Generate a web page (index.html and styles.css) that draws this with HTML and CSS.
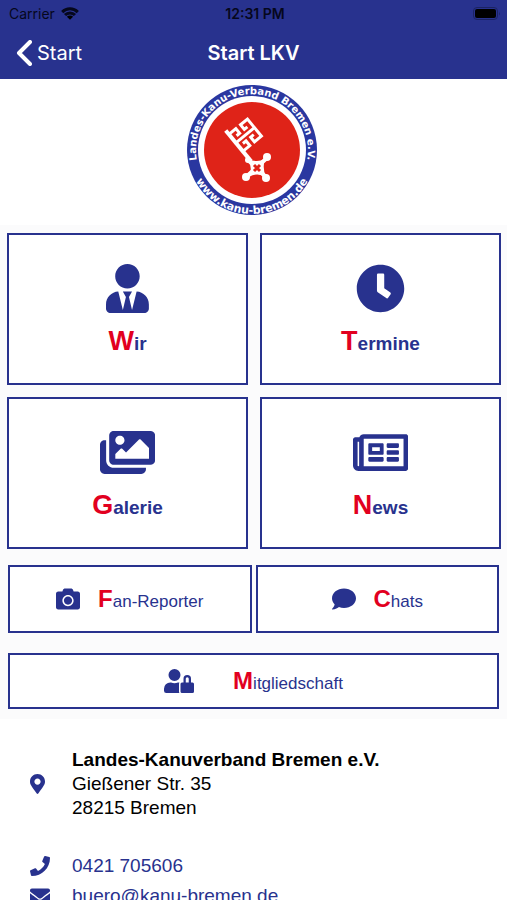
FILE: index.html
```html
<!DOCTYPE html>
<html lang="de">
<head>
    <meta charset="utf-8">
    <meta name="viewport" content="width=device-width, initial-scale=1.0">
    <title>Start LKV</title>
    <link rel="stylesheet" href="styles.css">
</head>
<body>
    <header class="topbar">
        <div class="statusbar">
            <div class="carrier">
                <span>Carrier</span>
                <svg class="wifi" viewBox="0 0 18 13" aria-hidden="true">
                    <path class="wifi-arc" d="M1.2 5.1a11 11 0 0 1 15.6 0M4 8a7 7 0 0 1 10 0"/>
                    <path d="M9 12.8L5.9 9.7a4.4 4.4 0 0 1 6.2 0z"/>
                </svg>
            </div>
            <span class="clock">12:31 PM</span>
            <svg class="battery" viewBox="0 0 28 13" aria-hidden="true">
                <rect class="battery-case" x="0.5" y="0.5" width="24" height="12" rx="3.5"/>
                <rect x="2" y="2" width="21" height="9" rx="2"/>
                <path class="battery-tip" d="M26 4.5q1.5 2 0 4z"/>
            </svg>
        </div>
        <nav class="navbar">
            <a class="back" href="#start">
                <svg class="chevron" viewBox="0 0 16 26" aria-hidden="true"><path d="M14 2L3 13l11 11"/></svg>
                Start
            </a>
            <h1 class="title">Start LKV</h1>
        </nav>
    </header>

    <main class="content">
        <div class="logo-wrap">
            <svg class="logo" viewBox="0 0 130 130" role="img" aria-label="Landes-Kanu-Verband Bremen">
                <defs>
                    <path id="arcTop" d="M13 86A56 56 0 1 1 117 86"/>
                    <path id="arcBottom" d="M1 65A64 64 0 0 0 129 65"/>
                </defs>
                <circle class="logo-ring" cx="65" cy="65" r="65"/>
                <circle class="logo-white" cx="65" cy="65" r="54"/>
                <circle class="logo-red" cx="65" cy="65" r="48"/>
                <text class="logo-text logo-text-top"><textPath href="#arcTop" startOffset="50%">Landes-Kanu-Verband Bremen e.V.</textPath></text>
                <text class="logo-text"><textPath href="#arcBottom" startOffset="50%">www.kanu-bremen.de</textPath></text>
                <g class="key" transform="translate(40 47) rotate(50.6)">
                    <path d="M-2 0H38"/>
                    <path class="key-bit" d="M14 0V-24M3 0V-9H9V-5M25 0V-9H19V-5M9 -19V-15H3V-24H25V-15H19V-19"/>
                </g>
                <path class="key-bow" d="M61 75L80 93M81 72L59 92"/>
                <path class="logo-white" d="M61 74q9 4 17 0q-3 9 1 18q-9-5-17 0q4-9-1-18z"/>
                <g class="logo-white">
                    <circle cx="80" cy="72" r="4"/>
                    <circle cx="59" cy="92" r="4"/>
                    <circle cx="79" cy="93" r="4"/>
                    <circle cx="61" cy="75" r="3"/>
                </g>
                <path class="key-x" d="M67 80l6 6M73 80l-6 6"/>
            </svg>
        </div>

        <section class="menu">
            <div class="tiles">
                <a class="tile" href="#wir">
                    <svg class="icon icon-tile" viewBox="0 0 448 512" aria-hidden="true"><path d="M224 256c70.7 0 128-57.3 128-128S294.7 0 224 0 96 57.3 96 128s57.3 128 128 128zm95.8 32.6L272 480l-32-136 32-56h-96l32 56-32 136-47.8-191.4C56.9 292 0 350.3 0 422.4V464c0 26.5 21.5 48 48 48h352c26.5 0 48-21.5 48-48v-41.6c0-72.1-56.9-130.4-128.2-133.8z"/></svg>
                    <span class="label"><b>W</b>ir</span>
                </a>
                <a class="tile" href="#termine">
                    <svg class="icon icon-tile" viewBox="0 0 512 512" aria-hidden="true"><path d="M256 8C119 8 8 119 8 256s111 248 248 248 248-111 248-248S393 8 256 8zm106 307l-28 41a10 10 0 0 1-14 2l-93-63a20 20 0 0 1-8-16V112a12 12 0 0 1 12-12h52a12 12 0 0 1 12 12v142l64 45a12 12 0 0 1 3 16z"/></svg>
                    <span class="label"><b>T</b>ermine</span>
                </a>
                <a class="tile" href="#galerie">
                    <svg class="icon icon-tile" viewBox="0 0 576 512" aria-hidden="true"><path d="M480 416v16c0 26.510-21.490 48-48 48H48c-26.510 0-48-21.490-48-48V176c0-26.510 21.490-48 48-48h16v208c0 44.112 35.888 80 80 80h336zm96-80V80c0-26.510-21.490-48-48-48H144c-26.510 0-48 21.490-48 48v256c0 26.510 21.490 48 48 48h384c26.510 0 48-21.490 48-48zM256 128c0 26.510-21.490 48-48 48s-48-21.490-48-48 21.490-48 48-48 48 21.490 48 48zm-96 144l55.515-55.515c4.686-4.686 12.284-4.686 16.971 0L272 256l135.515-135.515c4.686-4.686 12.284-4.686 16.971 0L512 208v112H160v-48z"/></svg>
                    <span class="label"><b>G</b>alerie</span>
                </a>
                <a class="tile" href="#news">
                    <svg class="icon icon-tile" viewBox="0 0 576 512" aria-hidden="true"><path d="M552 64H112c-20.858 0-38.643 13.377-45.248 32H24c-13.255 0-24 10.745-24 24v272c0 30.928 25.072 56 56 56h496c13.255 0 24-10.745 24-24V88c0-13.255-10.745-24-24-24zM48 392V144h16v248c0 4.411-3.589 8-8 8s-8-3.589-8-8zm480 8H111.422c.374-2.614.578-5.283.578-8V112h416v288zM172 280h136c6.627 0 12-5.373 12-12v-96c0-6.627-5.373-12-12-12H172c-6.627 0-12 5.373-12 12v96c0 6.627 5.373 12 12 12zm28-80h80v40h-80v-40zm-40 140v-24c0-6.627 5.373-12 12-12h136c6.627 0 12 5.373 12 12v24c0 6.627-5.373 12-12 12H172c-6.627 0-12-5.373-12-12zm192 0v-24c0-6.627 5.373-12 12-12h104c6.627 0 12 5.373 12 12v24c0 6.627-5.373 12-12 12H364c-6.627 0-12-5.373-12-12zm0-144v-24c0-6.627 5.373-12 12-12h104c6.627 0 12 5.373 12 12v24c0 6.627-5.373 12-12 12H364c-6.627 0-12-5.373-12-12zm0 72v-24c0-6.627 5.373-12 12-12h104c6.627 0 12 5.373 12 12v24c0 6.627-5.373 12-12 12H364c-6.627 0-12-5.373-12-12z"/></svg>
                    <span class="label"><b>N</b>ews</span>
                </a>
            </div>

            <div class="bars">
                <a class="bar" href="#fan-reporter">
                    <svg class="icon icon-bar" viewBox="0 0 512 512" aria-hidden="true"><path d="M512 144v288c0 26.5-21.5 48-48 48H48c-26.5 0-48-21.5-48-48V144c0-26.5 21.5-48 48-48h88l12.3-32.9c7-18.7 24.9-31.1 44.900-31.1h125.5c20 0 37.900 12.4 44.900 31.1L376 96h88c26.5 0 48 21.5 48 48zM376 288c0-66.2-53.8-120-120-120s-120 53.8-120 120 53.8 120 120 120 120-53.8 120-120zm-32 0c0 48.5-39.5 88-88 88s-88-39.5-88-88 39.5-88 88-88 88 39.5 88 88z"/></svg>
                    <span class="label"><b>F</b>an-Reporter</span>
                </a>
                <a class="bar" href="#chats">
                    <svg class="icon icon-bar" viewBox="0 0 512 512" aria-hidden="true"><path d="M256 32C114.6 32 0 125.1 0 240c0 49.6 21.4 95 57 130.7C44.5 421.1 2.7 466 2.2 466.5c-2.2 2.3-2.8 5.7-1.5 8.7S4.8 480 8 480c66.3 0 116-31.8 140.6-51.4 32.7 12.3 69 19.4 107.4 19.4 141.4 0 256-93.1 256-208S397.4 32 256 32z"/></svg>
                    <span class="label"><b>C</b>hats</span>
                </a>
                <a class="bar bar-wide" href="#mitgliedschaft">
                    <svg class="icon icon-bar" viewBox="0 0 640 512" aria-hidden="true"><path d="M224 256A128 128 0 1 0 96 128a128 128 0 0 0 128 128zm96 64a63 63 0 0 1 8-30.500c-4.800-.5-9.500-1.500-14.500-1.500h-16.700a174 174 0 0 1-145.800 0h-16.700A134.400 134.400 0 0 0 0 422.400V464a48 48 0 0 0 48 48h280.900a63.500 63.500 0 0 1-8.900-32zm288-32h-32v-80a80 80 0 0 0-160 0v80h-32a32 32 0 0 0-32 32v160a32 32 0 0 0 32 32h224a32 32 0 0 0 32-32V320a32 32 0 0 0-32-32zm-80 0h-64v-80a32 32 0 0 1 64 0z"/></svg>
                    <span class="label"><b>M</b>itgliedschaft</span>
                </a>
            </div>
        </section>

        <section class="contact">
            <div class="contact-row contact-address">
                <svg class="icon icon-contact" viewBox="0 0 384 512" aria-hidden="true"><path d="M172.268 501.670C26.970 291.031 0 269.413 0 192 0 85.961 85.961 0 192 0s192 85.961 192 192c0 77.413-26.970 99.031-172.268 309.670-9.535 13.774-29.930 13.773-39.464 0zM192 272c44.183 0 80-35.817 80-80s-35.817-80-80-80-80 35.817-80 80 35.817 80 80 80z"/></svg>
                <address>
                    <strong>Landes-Kanuverband Bremen e.V.</strong><br>
                    Gießener Str. 35<br>
                    28215 Bremen
                </address>
            </div>
            <div class="contact-row">
                <svg class="icon icon-contact" viewBox="0 0 512 512" aria-hidden="true"><path d="M493.4 24.6l-104-24c-11.3-2.6-22.9 3.3-27.5 13.9l-48 112c-4.2 9.8-1.4 21.3 6.900 28l60.6 49.6c-36 76.7-98.900 140.5-177.2 177.2l-49.6-60.6c-6.8-8.3-18.2-11.1-28-6.900l-112 48C3.9 366.5-2 378.1.6 389.4l24 104C27.1 504.2 36.7 512 48 512c256.1 0 464-207.5 464-464 0-11.2-7.7-20.900-18.6-23.4z"/></svg>
                <a href="tel:0421705606">0421 705606</a>
            </div>
            <div class="contact-row">
                <svg class="icon icon-contact" viewBox="0 0 512 512" aria-hidden="true"><path d="M502.3 190.8c3.9-3.1 9.7-.2 9.7 4.7V400c0 26.5-21.5 48-48 48H48c-26.5 0-48-21.5-48-48V195.6c0-5 5.7-7.8 9.7-4.7 22.4 17.4 52.1 39.5 154.1 113.6 21.1 15.4 56.7 47.8 92.2 47.6 35.7.3 72-32.8 92.3-47.6 102-74.1 131.6-96.3 154-113.7zM256 320c23.2.4 56.6-29.2 73.4-41.4 132.7-96.3 142.8-104.7 173.4-128.7 5.8-4.5 9.2-11.5 9.2-18.9v-19c0-26.5-21.5-48-48-48H48c-26.5 0-48 21.5-48 48v19c0 7.4 3.4 14.3 9.2 18.9 30.6 23.9 40.7 32.4 173.4 128.7 16.8 12.2 50.2 41.8 73.4 41.4z"/></svg>
                <a href="mailto:buero@kanu-bremen.de">buero@kanu-bremen.de</a>
            </div>
        </section>
    </main>
</body>
</html>
```
FILE: styles.css
```css
* {
    box-sizing: border-box;
}

body {
    margin: 0;
    height: 100vh;
    display: flex;
    flex-direction: column;
    font-family: "Liberation Sans", Arial, sans-serif;
    background: #fff;
    color: #000;
}

a {
    color: #28328e;
    text-decoration: none;
}

/* Header */
.topbar {
    flex: none;
    background: #28328e;
    font-family: Inter, sans-serif;
}

.statusbar {
    display: grid;
    grid-template-columns: 1fr auto 1fr;
    align-items: center;
    height: 27px;
    padding: 0 6px 0 9px;
    font-size: 14px;
    color: #05071c;
}

.carrier {
    display: flex;
    align-items: center;
    gap: 6px;
}

.wifi {
    width: 18px;
    height: 13px;
}

.wifi-arc {
    fill: none;
    stroke: #05071c;
    stroke-width: 3;
}

.clock {
    font-weight: 600;
}

.battery {
    width: 28px;
    height: 13px;
    justify-self: end;
}

.battery-case {
    fill: none;
    stroke: #1b2363;
}

.battery-tip {
    fill: #1b2363;
}

.navbar {
    display: grid;
    grid-template-columns: 1fr auto 1fr;
    align-items: center;
    height: 52px;
    padding: 0 16px;
}

.back {
    display: flex;
    align-items: center;
    gap: 5px;
    font-size: 20px;
    color: #fff;
}

.chevron {
    width: 16px;
    height: 26px;
    fill: none;
    stroke: #fff;
    stroke-width: 4;
    stroke-linecap: round;
    stroke-linejoin: round;
}

.title {
    margin: 0;
    font-size: 20px;
    font-weight: 600;
    color: #fff;
}

/* Content */
.content {
    flex: 1;
    min-height: 0;
    overflow-y: auto;
    scrollbar-width: none;
}

.logo-wrap {
    display: flex;
    justify-content: center;
    padding: 6px 4px 10px 0;
}

.logo {
    width: 130px;
    height: 130px;
}

.logo-ring {
    fill: #2a37a0;
}

.logo-white {
    fill: #fff;
}

.logo-red {
    fill: #df2318;
}

.logo-text {
    font-family: "DejaVu Sans", sans-serif;
    font-size: 11px;
    font-weight: bold;
    fill: #fff;
    text-anchor: middle;
}

.logo-text-top {
    font-size: 10px;
}

.key,
.key-bow {
    fill: none;
    stroke: #fff;
    stroke-width: 4;
}

.key-bit {
    stroke-width: 3;
}

.key-x {
    stroke: #df2318;
    stroke-width: 3;
}

/* Menu */
.menu {
    padding: 8px 6px 10px 7px;
    background: #fbfbfc;
}

.tiles {
    display: grid;
    grid-template-columns: 1fr 1fr;
    gap: 12px;
}

.tile,
.bar {
    display: flex;
    align-items: center;
    justify-content: center;
    background: #fff;
    border: 2px solid #28328e;
}

.tile {
    flex-direction: column;
    gap: 13px;
    height: 152px;
    padding-top: 3px;
    font-size: 19px;
    font-weight: bold;
}

.bars {
    display: grid;
    grid-template-columns: 1fr 1fr;
    gap: 20px 4px;
    margin: 16px 2px 0 1px;
}

.bar {
    gap: 18px;
    height: 68px;
    font-size: 17px;
}

.bar-wide {
    grid-column: 1 / -1;
    gap: 39px;
    height: 56px;
}

.label b {
    color: #e2001f;
}

.tile .label b {
    font-size: 27px;
}

.bar .label b {
    font-size: 24px;
}

.icon {
    fill: #28328e;
}

.icon-tile {
    height: 49px;
}

.icon-bar {
    height: 24px;
}

/* Contact */
.contact {
    padding: 29px 30px 20px;
    font-size: 19px;
    line-height: 24px;
}

.contact-row {
    display: grid;
    grid-template-columns: 20px 1fr;
    align-items: center;
    gap: 22px;
    margin-bottom: 6px;
}

.contact-address {
    margin-bottom: 34px;
}

.contact address {
    font-style: normal;
}

.icon-contact {
    height: 20px;
}
```
